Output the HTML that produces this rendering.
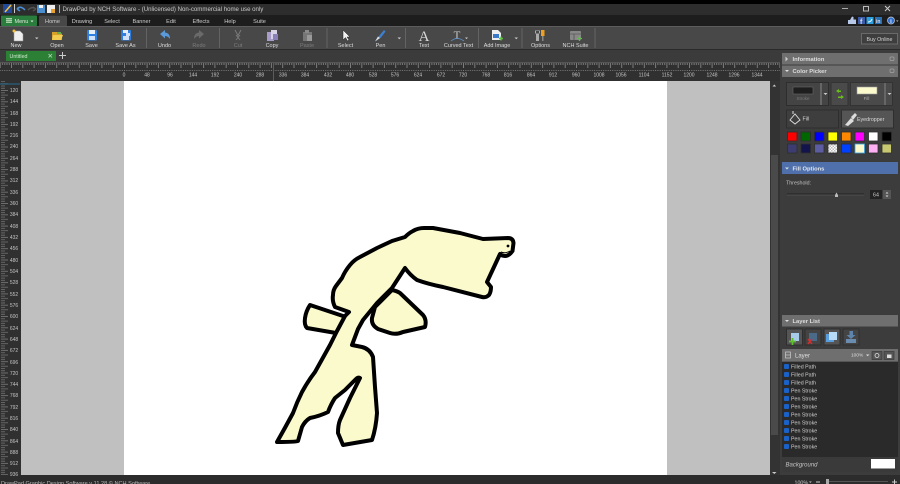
<!DOCTYPE html>
<html><head><meta charset="utf-8"><title>DrawPad</title>
<style>
html,body{margin:0;padding:0;width:900px;height:484px;overflow:hidden;background:#2c2c2c;font-family:"Liberation Sans",sans-serif}
div{position:absolute;box-sizing:border-box}
svg{position:absolute;left:0;top:0;filter:blur(.35px)}
text{font-family:"Liberation Sans",sans-serif}
</style></head><body>
<div style="left:0;top:0;width:900px;height:4px;background:#000"></div>
<div style="left:0;top:4px;width:900px;height:11px;background:#2d2d2d"></div>
<div style="left:0;top:15px;width:900px;height:11px;background:#1d1d1d"></div>
<div style="left:0;top:26px;width:900px;height:24px;background:#484848;border-top:1px solid #5c5c5c;border-bottom:1px solid #2a2a2a"></div>
<div style="left:0;top:50px;width:780px;height:12px;background:#3b3b3b"></div>
<div style="left:0;top:62px;width:780px;height:19px;background:#303030;border-top:1px solid #555"></div>
<div style="left:0;top:81px;width:21px;height:394px;background:#303030"></div>
<div style="left:21px;top:81px;width:749px;height:394px;background:#c0c0c0"></div>
<div style="left:124px;top:81px;width:543px;height:394px;background:#fff"></div>
<div style="left:770px;top:81px;width:10px;height:394px;background:#333"></div>
<div style="left:771px;top:155px;width:7px;height:280px;background:#4a4a4a"></div>
<div style="left:780px;top:50px;width:120px;height:425px;background:#3c3c3c"></div>
<div style="left:0;top:475px;width:900px;height:9px;background:#2c2c2c"></div>

<svg width="900" height="484" viewBox="0 0 900 484">
<defs>
<pattern id="tt" x="124" y="0" width="22.6" height="10" patternUnits="userSpaceOnUse">
<path d="M.5 0V8M2.8 0V5M5.1 0V5M7.3 0V5M9.6 0V5M11.8 0V8M14.1 0V5M16.4 0V5M18.6 0V5M20.9 0V5" stroke="#7c7c7c" stroke-width="1"/>
</pattern>
<pattern id="tl" x="0" y="90" width="10" height="11.3" patternUnits="userSpaceOnUse">
<path d="M1 .5H8M1 2.8H5M1 5.1H8M1 7.3H5M1 9.6H5" stroke="#6e6e6e" stroke-width=".9"/>
</pattern>
<pattern id="ck" width="3" height="3" patternUnits="userSpaceOnUse"><rect width="3" height="3" fill="#fff"/><rect width="1.5" height="1.5" fill="#bbb"/><rect x="1.5" y="1.5" width="1.5" height="1.5" fill="#bbb"/></pattern>
</defs>

<!-- rulers -->
<rect x="0" y="63" width="780" height="8" fill="url(#tt)"/>
<rect x="0" y="81" width="9" height="394" fill="url(#tl)"/>
<path d="M273.500 63V81" stroke="#2a6a90"/>
<path d="M0 84H20" stroke="#2a6a90"/>
<g fill="#c4c4c4" font-size="5" text-anchor="middle">
<text x="124" y="76.500">0</text><text x="147" y="76.500">48</text><text x="170" y="76.500">96</text><text x="193" y="76.500">144</text><text x="215" y="76.500">192</text><text x="238" y="76.500">240</text><text x="260" y="76.500">288</text><text x="283" y="76.500">336</text><text x="305" y="76.500">384</text><text x="328" y="76.500">432</text><text x="350" y="76.500">480</text><text x="373" y="76.500">528</text><text x="395" y="76.500">576</text><text x="418" y="76.500">624</text><text x="441" y="76.500">672</text><text x="463" y="76.500">720</text><text x="486" y="76.500">768</text><text x="508" y="76.500">816</text><text x="531" y="76.500">864</text><text x="553" y="76.500">912</text><text x="576" y="76.500">960</text><text x="599" y="76.500">1008</text><text x="621" y="76.500">1056</text><text x="644" y="76.500">1104</text><text x="667" y="76.500">1152</text><text x="689" y="76.500">1200</text><text x="712" y="76.500">1248</text><text x="734" y="76.500">1296</text><text x="757" y="76.500">1344</text>
</g>
<g fill="#c4c4c4" font-size="5" text-anchor="middle">
<text x="14" y="92">120</text><text x="14" y="103">144</text><text x="14" y="115">168</text><text x="14" y="126">192</text><text x="14" y="137">216</text><text x="14" y="148">240</text><text x="14" y="160">264</text><text x="14" y="171">288</text><text x="14" y="182">312</text><text x="14" y="194">336</text><text x="14" y="205">360</text><text x="14" y="216">384</text><text x="14" y="228">408</text><text x="14" y="239">432</text><text x="14" y="250">456</text><text x="14" y="262">480</text><text x="14" y="273">504</text><text x="14" y="284">528</text><text x="14" y="296">552</text><text x="14" y="307">576</text><text x="14" y="318">600</text><text x="14" y="330">624</text><text x="14" y="341">648</text><text x="14" y="352">672</text><text x="14" y="364">696</text><text x="14" y="375">720</text><text x="14" y="386">744</text><text x="14" y="397">768</text><text x="14" y="409">792</text><text x="14" y="420">816</text><text x="14" y="431">840</text><text x="14" y="443">864</text><text x="14" y="454">888</text><text x="14" y="465">912</text><text x="14" y="476">936</text>
</g>

<!-- drawing -->
<g fill="#fbfacd" stroke="#000" stroke-width="4" stroke-linejoin="round" stroke-linecap="round">
<path d="M310 305Q306 311 305 318Q304 325 307 328L336 333L346 317Z"/>
<path d="M392 290Q397 291 400 293L423 315Q427 320 425 327L403 332Q396 335 390 333L378 329Q371 325 372 318L375 307Z"/>
<path d="M277 442Q285 428 293 413Q297 402 302 392Q308 381 315 372L330 345L337 331L345 316L349 312L335 307Q332 301 333 295Q333 290 336 286L342 278Q345 271 350 265Q354 260 360 257L377 248L392 241L405 237Q409 233 413 231Q418 228 424 228L433 228L460 233L483 239L508 238Q513 238 513.500 243L512.500 251Q509 256 505 256Q502 256 500 254L487 282L491 287Q491 292 489 295Q486 298 482 297L443 287Q428 284 417 280Q410 275 405 268L392 288L377 303L363 320L358 329L352 345L362 347Q370 349 373 357L375 387L377 413Q376 428 372 440L343 445L338 433Q338 425 340 420L350 398L360 378Q358 377 356 379L345 390L335 398Q331 404 328 412Q320 416 310 418Q305 421 302 427L298 441Q296 442 277 442Z"/>
</g>
<circle cx="508" cy="246" r="1.400" fill="#000"/>
<path d="M501 252Q505 254 510 251" fill="none" stroke="#000" stroke-width="1"/>

<!-- title bar icons -->
<rect x="3" y="4" width="9" height="9" fill="#234a9a"/><path d="M5 12L11 5" stroke="#f0c040" stroke-width="1.500"/>
<rect x="14" y="4" width="1" height="9" fill="#ccc"/>
<path d="M17 9Q20 5 25 10M17 9L20 7M17 9L20 11" fill="none" stroke="#4a90d8" stroke-width="1.500"/>
<path d="M36 9Q32 6 28 10M36 9L33 7M36 9L33 11" fill="none" stroke="#555" stroke-width="1.300"/>
<rect x="37" y="5" width="8" height="8" fill="#4a8ed0"/><rect x="39" y="5" width="4" height="3" fill="#eee"/>
<rect x="47" y="5" width="8" height="8" fill="#eee"/><rect x="51" y="9" width="4" height="4" fill="#e8a030"/>
<rect x="59" y="5" width="1" height="8" fill="#aaa"/>
<text x="62.500" y="11" font-size="6.100" fill="#c8c8c8">DrawPad by NCH Software - (Unlicensed) Non-commercial home use only</text>

<!-- window controls -->
<path d="M842 8.500H848" stroke="#aaa"/>
<rect x="863.500" y="6.500" width="5" height="4.500" fill="none" stroke="#bbb"/>
<path d="M885 6L890 11M890 6L885 11" stroke="#ccc"/>

<!-- tabs -->
<rect x="1" y="15.500" width="36" height="10.500" rx="1" fill="#2a7d3c"/>
<rect x="6" y="18" width="6" height="5" fill="#a8d0a8"/><path d="M6 19.500H12M6 21.500H12" stroke="#2a7d3c" stroke-width=".6"/>
<text x="14.500" y="23" font-size="5.500" fill="#e0e8e0">Menu</text>
<path d="M30.500 20.500h3l-1.500 1.700z" fill="#e0e8e0"/>
<path d="M39 26V17q0-1.500 1.500-1.500h25q1.500 0 1.500 1.500V26Z" fill="#484848"/>
<g font-size="5.600" fill="#cfcfcf" text-anchor="middle">
<text x="52.500" y="23">Home</text><text x="82" y="23">Drawing</text><text x="112" y="23">Select</text><text x="141.500" y="23">Banner</text><text x="171" y="23">Edit</text><text x="201" y="23">Effects</text><text x="230" y="23">Help</text><text x="259.500" y="23">Suite</text>
</g>

<!-- social -->
<path d="M848 24V20H850L852 16.500L853.500 17V19.500H856V24Z" fill="#b8c8e8"/>
<rect x="858" y="17" width="7" height="7" fill="#3b5ba8"/><text x="860" y="24" font-size="7" font-weight="bold" fill="#dde">f</text>
<rect x="866.500" y="17" width="7" height="7" fill="#2f9fe0"/><path d="M868 22Q871 22 872 19" stroke="#fff" fill="none"/>
<rect x="875" y="17" width="7" height="7" fill="#2a6fb0"/><text x="876" y="23" font-size="5" font-weight="bold" fill="#dde">in</text>
<circle cx="891" cy="20.500" r="3.500" fill="#2f6fd0" stroke="#ccc" stroke-width=".7"/><text x="891" y="23" font-size="5" font-weight="bold" fill="#fff" text-anchor="middle">i</text>
<path d="M896 20.500h2.500l-1.200 1.200z" fill="#ccc"/>

<!-- toolbar separators -->
<g stroke="#636363">
<path d="M146.500 28V48M219.500 28V48M327 28V48M405.500 28V48M478.500 28V48M522 28V48M595 28V48"/>
</g>
<!-- toolbar labels -->
<g font-size="5.500" fill="#dcdcdc" text-anchor="middle">
<text x="16" y="47">New</text><text x="57" y="47">Open</text><text x="91.500" y="47">Save</text><text x="125.500" y="47">Save As</text><text x="164.500" y="47">Undo</text><text x="345.500" y="47">Select</text><text x="380.500" y="47">Pen</text><text x="424" y="47">Text</text><text x="458.500" y="47">Curved Text</text><text x="497" y="47">Add Image</text><text x="540.500" y="47">Options</text><text x="575.500" y="47">NCH Suite</text><text x="272" y="47">Copy</text>
<text x="199" y="47" fill="#7c7c7c">Redo</text><text x="238" y="47" fill="#7c7c7c">Cut</text><text x="307" y="47" fill="#7c7c7c">Paste</text>
</g>
<!-- toolbar icons -->
<path d="M14 31H20L23 34V41H14Z" fill="#eee" stroke="#999" stroke-width=".5"/><circle cx="14" cy="31" r="1.500" fill="#f0c040"/>
<path d="M35 37.500h3.500l-1.700 1.800z" fill="#ccc"/>
<path d="M52 32H57L58 33.500H62V40H52Z" fill="#d9a028"/><path d="M53 35H63L61 40H52Z" fill="#f2cc50"/><path d="M57 32H61V34H57Z" fill="#6cb04c"/>
<rect x="87" y="30" width="10" height="10.500" rx="1" fill="#2f7fe0"/><rect x="89" y="30" width="6" height="4" fill="#e8eef8"/><rect x="89" y="36" width="6" height="4" fill="#cfe0f8"/>
<rect x="121" y="30" width="10" height="10.500" rx="1" fill="#2f7fe0"/><rect x="123" y="30" width="5" height="3" fill="#e8eef8"/><rect x="123" y="36" width="6" height="4" fill="#cfe0f8"/><rect x="126" y="33" width="4" height="3" fill="#cfe0f8"/>
<path d="M160 34L165 30V32.500Q170 33 170 39Q168 36 165 36V38.500Z" fill="#5a9ad8"/>
<path d="M204 34L199 30V32.500Q194 33 194 39Q196 36 199 36V38.500Z" fill="#6a6a6a"/>
<path d="M235 30L238 35.500L241 30M236 40L240 35M240 40L236 35" fill="none" stroke="#7a7a7a" stroke-width="1"/>
<rect x="267" y="32" width="7" height="9" fill="#a89cc8"/><rect x="271" y="30" width="6" height="9" fill="#d8d4e8"/><rect x="273" y="34" width="5" height="6" fill="#8880b8"/>
<rect x="303" y="32" width="9" height="9" fill="#777"/><rect x="305" y="30" width="4" height="3" fill="#8a8a8a"/><rect x="307" y="35" width="5" height="6" fill="#9a9a9a"/>
<path d="M343 30V40L345.500 37.500L347.500 41L349 40L347 37H350Z" fill="#f0f0f0" stroke="#222" stroke-width=".5"/>
<path d="M376 41L379 36L384 30L385.500 31.500L381 37.500Z" fill="#3f7fd0"/><path d="M375 41.500L378 36.500L380 38Z" fill="#e0e0e0"/>
<path d="M397.500 37.500h3.500l-1.700 1.800z" fill="#ccc"/>
<text x="424" y="41" font-size="15" fill="#d8d8d8" text-anchor="middle" style="font-family:'Liberation Serif',serif">A</text>
<text x="457" y="38.500" font-size="11" fill="#ccc" text-anchor="middle" style="font-family:'Liberation Serif',serif">T</text>
<path d="M451 41Q457 36 464 41" fill="none" stroke="#5a90d0" stroke-width=".8"/>
<path d="M465 37.500h3l-1.500 1.600z" fill="#ccc"/>
<path d="M492 30H498L501 33V40H492Z" fill="#eee"/><rect x="493" y="34" width="6" height="4" fill="#3a78c8"/><path d="M499 38.500H503M501 36.500V40.500" stroke="#5cc040" stroke-width="1.400"/>
<path d="M514.500 37.500h3.500l-1.700 1.800z" fill="#ccc"/>
<path d="M536 31V41H539V31ZM535 30.500H540V33.500H535Z" fill="#aaa"/><rect x="541" y="30" width="3.500" height="6" fill="#f0a020"/><rect x="542" y="36" width="1.500" height="5" fill="#888"/>
<rect x="570" y="31" width="11" height="9" rx="1" fill="#888"/><path d="M570 34H581M574 34V40" stroke="#444" stroke-width=".6"/><path d="M577 38.500H582M579.500 36V41" stroke="#5cc040" stroke-width="1.300"/>

<!-- doc tab -->
<rect x="6" y="51" width="50" height="10" fill="#2b8035"/>
<text x="9.500" y="58" font-size="5.300" fill="#d0e8d0">Untitled</text>
<path d="M48.500 54L52 57.500M52 54L48.500 57.500" stroke="#c8e0c8" stroke-width=".7"/>
<path d="M59 55.500H66M62.500 52V59" stroke="#ccc" stroke-width="1"/>

<!-- Buy online -->
<rect x="861.500" y="33.500" width="36" height="10.500" fill="#3e3e3e" stroke="#6a6a6a"/>
<text x="879.500" y="41" font-size="5.300" fill="#d4d4d4" text-anchor="middle">Buy Online</text>

<!-- scrollbar arrows -->
<path d="M772.500 86.500h3.600l-1.800-2z" fill="#ccc"/>
<path d="M772 472h4.500l-2.200 2z" fill="#ccc"/>

<!-- right panel -->
<rect x="782" y="53" width="116" height="11.500" fill="#6f6f6f"/>
<rect x="782" y="65.500" width="116" height="11.500" fill="#6f6f6f"/>
<path d="M785.500 56.500L788 59L785.500 61.500Z" fill="#ccc"/>
<path d="M785 70h4l-2 2z" fill="#ddd"/>
<g font-size="5.800" font-weight="bold" fill="#dedede">
<text x="792.500" y="61">Information</text><text x="792.500" y="73">Color Picker</text>
</g>
<g fill="none" stroke="#a4a4a4" stroke-width=".7">
<rect x="890" y="57" width="4" height="3.500" rx="1"/><rect x="890" y="69" width="4" height="3.500" rx="1"/><rect x="890" y="168" width="4" height="3.500" rx="1"/><rect x="890" y="319" width="4" height="3.500" rx="1"/>
</g>

<rect x="786.500" y="82.500" width="42" height="23" fill="#444" stroke="#2e2e2e"/>
<rect x="793" y="87" width="20" height="7" fill="#1e1e1e" stroke="#666" stroke-width=".6"/>
<text x="803" y="100" font-size="4.500" fill="#7a7a7a" text-anchor="middle">Stroke</text>
<rect x="820" y="83" width="2" height="22" fill="#666"/>
<path d="M823.500 93h4l-2 2z" fill="#ccc"/>
<rect x="831" y="82.500" width="17" height="23" fill="#4a4a4a" stroke="#333"/>
<path d="M836 91L839 89V90.500H841V92H839V93Z" fill="#6abe1a"/><path d="M844 97L841 95V96.500H838V98H841V99Z" fill="#6abe1a"/>
<rect x="850.500" y="82.500" width="42" height="23" fill="#4a4a4a" stroke="#333"/>
<rect x="857" y="87" width="20" height="7" fill="#fbfacd" stroke="#999" stroke-width=".6"/>
<text x="866.500" y="100" font-size="4.500" fill="#aaa" text-anchor="middle">Fill</text>
<rect x="884" y="83" width="2" height="22" fill="#666"/>
<path d="M887.500 93h4l-2 2z" fill="#ccc"/>

<rect x="786.500" y="110" width="52" height="18" fill="#3e3e3e" stroke="#2e2e2e"/>
<rect x="841.500" y="110" width="52" height="18" fill="#555" stroke="#2e2e2e"/>
<path d="M790 120L795 114L800 120L795 124Z" fill="none" stroke="#ddd" stroke-width=".9"/><path d="M793 114V111" stroke="#ddd"/>
<text x="802.500" y="120.500" font-size="5.300" fill="#d8d8d8">Fill</text>
<path d="M845 125L851 118L854 121L848 126ZM851 117L855 113L857 115L853 120Z" fill="#ddd"/>
<text x="857" y="121" font-size="5.300" fill="#d8d8d8">Eyedropper</text>

<g stroke="#2e2e2e" stroke-width=".8">
<rect x="787.500" y="132" width="9.500" height="9" fill="#f00"/><rect x="801" y="132" width="9.500" height="9" fill="#060"/><rect x="814.500" y="132" width="9.500" height="9" fill="#00f"/><rect x="828" y="132" width="9.500" height="9" fill="#ff0"/><rect x="841.500" y="132" width="9.500" height="9" fill="#f80"/><rect x="855" y="132" width="9.500" height="9" fill="#f0f"/><rect x="868.500" y="132" width="9.500" height="9" fill="#fff"/><rect x="882" y="132" width="9.500" height="9" fill="#000"/>
<rect x="787.500" y="144" width="9.500" height="9" fill="#3c3c70"/><rect x="801" y="144" width="9.500" height="9" fill="#14144c"/><rect x="814.500" y="144" width="9.500" height="9" fill="#5c5ca0"/><rect x="828" y="144" width="9.500" height="9" fill="url(#ck)"/><rect x="841.500" y="144" width="9.500" height="9" fill="#0040ff"/><rect x="855" y="144" width="9.500" height="9" fill="#fbfacd" stroke="#3aa0e0"/><rect x="868.500" y="144" width="9.500" height="9" fill="#ffb0f4"/><rect x="882" y="144" width="9.500" height="9" fill="#c8c870"/>
</g>

<rect x="782" y="162" width="116" height="12" fill="#4f70aa"/>
<path d="M785 167.500h4l-2 2z" fill="#ddd"/>
<text x="792.500" y="170.500" font-size="5.800" font-weight="bold" fill="#e4e8f0">Fill Options</text>
<text x="786" y="184.500" font-size="5.300" fill="#c0c0c0">Threshold:</text>
<path d="M787 194H864" stroke="#222" stroke-width="1"/><path d="M787 195H864" stroke="#666" stroke-width=".5"/>
<path d="M835 195L836.500 192.500L838 195V197H835Z" fill="#bbb"/>
<rect x="870" y="190" width="12" height="9" fill="#222"/>
<text x="876" y="196.500" font-size="5.300" fill="#ccc" text-anchor="middle">64</text>
<rect x="883" y="190" width="8" height="9" fill="#555"/>
<path d="M885.500 193.500h3l-1.500-1.500zM885.500 195.500h3l-1.500 1.500z" fill="#ddd"/>

<rect x="782" y="315" width="116" height="11.500" fill="#6f6f6f"/>
<path d="M785 320h4l-2 2z" fill="#ddd"/>
<text x="792.500" y="323" font-size="5.800" font-weight="bold" fill="#dedede">Layer List</text>

<g fill="#555" stroke="#2e2e2e"><rect x="786.500" y="329" width="16" height="16"/><rect x="805" y="329" width="16" height="16" fill="#444"/><rect x="824" y="329" width="16" height="16"/><rect x="843" y="329" width="16" height="16" fill="#444"/></g>
<rect x="791" y="333" width="8" height="8" fill="#a8cce8"/><path d="M789 341.500H796M792.500 338V345" stroke="#5cc030" stroke-width="1.800"/>
<rect x="809" y="333" width="8" height="8" fill="#4a6a88"/><path d="M808 339L812 344M812 339L808 344" stroke="#d03030" stroke-width="1.500"/>
<rect x="826" y="334" width="8" height="8" fill="#5a9ee0"/><rect x="829" y="332" width="8" height="8" fill="#b8dcf8"/>
<path d="M849.500 331H853V335H855.500L851 339L846.500 335H849.500Z" fill="#5c84ac"/><rect x="846" y="339" width="10" height="4" fill="#6a8cb0"/>

<rect x="782" y="349" width="116" height="12.500" fill="#6f6f6f"/>
<rect x="785.500" y="352" width="5" height="6" fill="none" stroke="#ccc" stroke-width=".7"/><path d="M785.500 355H790.500" stroke="#ccc" stroke-width=".7"/>
<text x="795" y="357.500" font-size="6" fill="#dedede">Layer</text>
<text x="851" y="356.500" font-size="4.800" fill="#dedede">100%</text>
<path d="M866 354.500h3.400l-1.700 1.700z" fill="#ddd"/>
<rect x="872" y="351.500" width="10" height="8" fill="#555" stroke="#333" stroke-width=".6"/><circle cx="877" cy="355.500" r="2" fill="none" stroke="#ddd" stroke-width=".8"/>
<rect x="884" y="351.500" width="10" height="8" fill="#555" stroke="#333" stroke-width=".6"/><rect x="887" y="354.500" width="4.500" height="3.500" fill="#ddd"/>

<rect x="782" y="362" width="116" height="95" fill="#2a2a2a"/>
<g fill="#1a62c8">
<rect x="784" y="364" width="5" height="5" rx="1"/><rect x="784" y="372" width="5" height="5" rx="1"/><rect x="784" y="380" width="5" height="5" rx="1"/><rect x="784" y="388" width="5" height="5" rx="1"/><rect x="784" y="396" width="5" height="5" rx="1"/><rect x="784" y="404" width="5" height="5" rx="1"/><rect x="784" y="412" width="5" height="5" rx="1"/><rect x="784" y="420" width="5" height="5" rx="1"/><rect x="784" y="428" width="5" height="5" rx="1"/><rect x="784" y="436" width="5" height="5" rx="1"/><rect x="784" y="444" width="5" height="5" rx="1"/>
</g>
<g font-size="5.300" fill="#cfcfcf">
<text x="791" y="368.500">Filled Path</text><text x="791" y="376.500">Filled Path</text><text x="791" y="384.500">Filled Path</text><text x="791" y="392.500">Pen Stroke</text><text x="791" y="400.500">Pen Stroke</text><text x="791" y="408.500">Pen Stroke</text><text x="791" y="416.500">Pen Stroke</text><text x="791" y="424.500">Pen Stroke</text><text x="791" y="432.500">Pen Stroke</text><text x="791" y="440.500">Pen Stroke</text><text x="791" y="448.500">Pen Stroke</text>
</g>
<rect x="782" y="457" width="116" height="15" fill="#3a3a3a"/>
<text x="785.500" y="466.500" font-size="6" font-style="italic" fill="#c4c4c4">Background</text>
<rect x="871" y="459" width="24" height="9.500" fill="#fff"/>

<!-- status -->
<text x="1" y="485" font-size="5.600" fill="#b8b8b8">DrawPad Graphic Design Software v 11.28 © NCH Software</text>
<text x="794.500" y="484.500" font-size="5.300" fill="#c8c8c8">100%</text>
<path d="M809 481.500h2.800l-1.400 1.400z" fill="#ccc"/>
<path d="M816 482H820" stroke="#ccc"/>
<rect x="826" y="479" width="3" height="5" fill="#aaa"/>
<path d="M829 481.500H888" stroke="#555"/>
<path d="M892 482H897M894.500 479.500V484" stroke="#ccc"/>
</svg>
</body></html>
